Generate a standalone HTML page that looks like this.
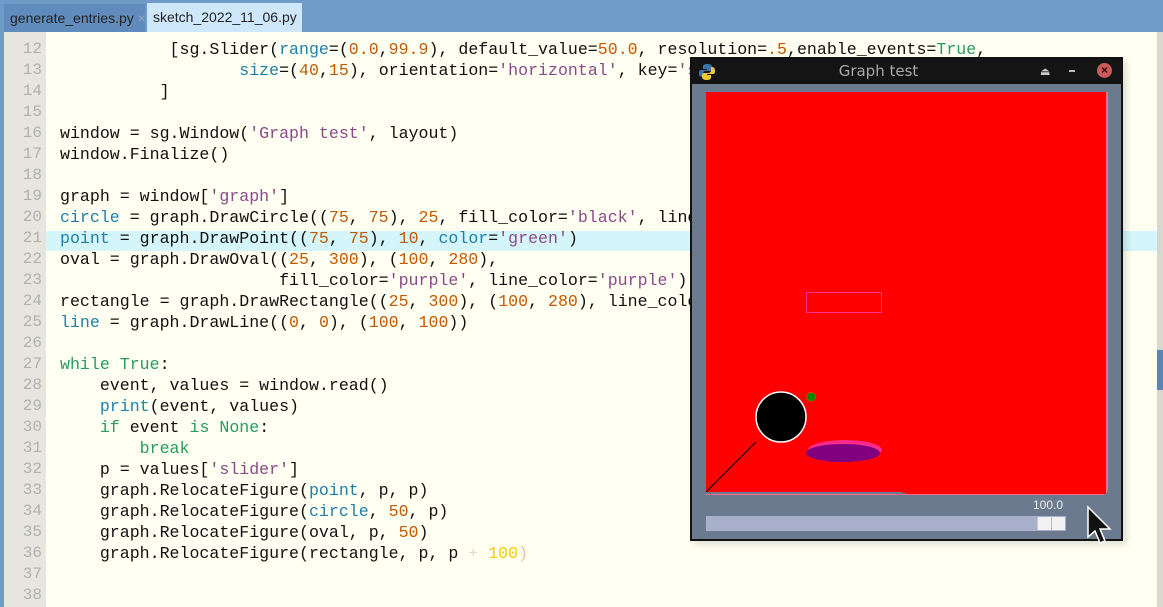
<!DOCTYPE html>
<html><head><meta charset="utf-8"><style>
*{margin:0;padding:0;box-sizing:border-box}
body{width:1163px;height:607px;overflow:hidden;background:#fffff2;position:relative;font-family:"Liberation Mono",monospace}
.tabbar{position:absolute;left:0;top:0;width:1163px;height:32px;background:#6f9bc9}
.tab{position:absolute;font-family:"Liberation Sans",sans-serif;font-size:14px;color:#222;padding:0 6px;line-height:28px;white-space:nowrap;overflow:hidden}
.gut{position:absolute;left:4px;top:32px;width:42px;height:575px;background:#e6e6df}
.lb{position:absolute;left:0;top:32px;width:4px;height:575px;background:#6f9bc9}
.ln{position:absolute;left:4px;width:38px;text-align:right;color:#b0b0b0;font-size:16px}
.cl{position:absolute;left:60px;font-size:16.6px;color:#111;white-space:pre;letter-spacing:0}
.k{color:#2a9a60}.v{color:#1f7fa8}.n{color:#c45a00}.s{color:#8a4a88}
.hl{position:absolute;left:46px;top:231px;width:1111px;height:20px;background:#d4f6fb}
.rs{position:absolute;left:1157px;top:32px;width:6px;height:575px;background:#d8d8d0}
</style></head><body>
<div class="tabbar"></div>
<div class="tab" style="left:4px;top:4px;width:141px;height:28px;background:#5f8cbc">generate_entries.py <span style="color:#9ab">×</span></div>
<div class="tab" style="left:147px;top:3px;width:155px;height:29px;background:#cfe7fb">sketch_2022_11_06.py <span style="color:#bcd">×</span></div>
<div class="lb"></div><div class="gut"></div><div class="rs"></div>
<div style="position:absolute;left:1157px;top:350px;width:6px;height:40px;background:#5b86b3"></div>
<div class="hl"></div>
<div style="font-size:16px">
<div class="ln" style="top:40px">12</div><div class="ln" style="top:61px">13</div><div class="ln" style="top:82px">14</div><div class="ln" style="top:103px">15</div><div class="ln" style="top:124px">16</div><div class="ln" style="top:145px">17</div><div class="ln" style="top:166px">18</div><div class="ln" style="top:187px">19</div><div class="ln" style="top:208px">20</div><div class="ln" style="top:229px">21</div><div class="ln" style="top:250px">22</div><div class="ln" style="top:271px">23</div><div class="ln" style="top:292px">24</div><div class="ln" style="top:313px">25</div><div class="ln" style="top:334px">26</div><div class="ln" style="top:355px">27</div><div class="ln" style="top:376px">28</div><div class="ln" style="top:397px">29</div><div class="ln" style="top:418px">30</div><div class="ln" style="top:439px">31</div><div class="ln" style="top:460px">32</div><div class="ln" style="top:481px">33</div><div class="ln" style="top:502px">34</div><div class="ln" style="top:523px">35</div><div class="ln" style="top:544px">36</div><div class="ln" style="top:565px">37</div><div class="ln" style="top:586px">38</div>
</div>
<div class="cl" style="top:40px">           [sg.Slider(<span class="v">range</span>=(<span class="n">0.0</span>,<span class="n">99.9</span>), default_value=<span class="n">50.0</span>, resolution=<span class="n">.5</span>,enable_events=<span class="k">True</span>,</div>
<div class="cl" style="top:61px">                  <span class="v">size</span>=(<span class="n">40</span>,<span class="n">15</span>), orientation=<span class="s">'horizontal'</span>, key=<span class="s">'slider'</span>)</div>
<div class="cl" style="top:82px">          ]</div>
<div class="cl" style="top:124px">window = sg.Window(<span class="s">'Graph test'</span>, layout)</div>
<div class="cl" style="top:145px">window.Finalize()</div>
<div class="cl" style="top:187px">graph = window[<span class="s">'graph'</span>]</div>
<div class="cl" style="top:208px"><span class="v">circle</span> = graph.DrawCircle((<span class="n">75</span>, <span class="n">75</span>), <span class="n">25</span>, fill_color=<span class="s">'black'</span>, line_color=<span class="s">'white'</span>)</div>
<div class="cl" style="top:229px"><span class="v">point</span> = graph.DrawPoint((<span class="n">75</span>, <span class="n">75</span>), <span class="n">10</span>, <span class="v">color</span>=<span class="s">'green'</span>)</div>
<div class="cl" style="top:250px">oval = graph.DrawOval((<span class="n">25</span>, <span class="n">300</span>), (<span class="n">100</span>, <span class="n">280</span>),</div>
<div class="cl" style="top:271px">                      fill_color=<span class="s">'purple'</span>, line_color=<span class="s">'purple'</span>)</div>
<div class="cl" style="top:292px">rectangle = graph.DrawRectangle((<span class="n">25</span>, <span class="n">300</span>), (<span class="n">100</span>, <span class="n">280</span>), line_color=<span class="s">'red'</span>)</div>
<div class="cl" style="top:313px"><span class="v">line</span> = graph.DrawLine((<span class="n">0</span>, <span class="n">0</span>), (<span class="n">100</span>, <span class="n">100</span>))</div>
<div class="cl" style="top:355px"><span class="k">while True</span>:</div>
<div class="cl" style="top:376px">    event, values = window.read()</div>
<div class="cl" style="top:397px">    <span class="v">print</span>(event, values)</div>
<div class="cl" style="top:418px">    <span class="k">if</span> event <span class="k">is None</span>:</div>
<div class="cl" style="top:439px">        <span class="k">break</span></div>
<div class="cl" style="top:460px">    p = values[<span class="s">'slider'</span>]</div>
<div class="cl" style="top:481px">    graph.RelocateFigure(<span class="v">point</span>, p, p)</div>
<div class="cl" style="top:502px">    graph.RelocateFigure(<span class="v">circle</span>, <span class="n">50</span>, p)</div>
<div class="cl" style="top:523px">    graph.RelocateFigure(oval, p, <span class="n">50</span>)</div>
<div class="cl" style="top:544px">    graph.RelocateFigure(rectangle, p, p <span style="color:#ddd">+</span> <span style="color:#f0d000">100</span><span style="color:#f0c0a0">)</span></div>

<!-- window -->
<div style="position:absolute;left:690px;top:57px;width:433px;height:484px;background:#6b7a8f;border:2px solid #111;box-shadow:4px 4px 6px rgba(0,0,0,.12)"></div>
<div style="position:absolute;left:692px;top:59px;width:429px;height:25px;background:#141414"></div>
<svg style="position:absolute;left:698px;top:63px" width="18" height="18" viewBox="0 0 18 18"><path d="M9 1C5 1 5 3 5 4v2h4v1H3C1 7 1 9 1 10s0 4 3 4h1v-3c0-2 1-3 3-3h4c1 0 2-1 2-2V4c0-2-2-3-5-3z" fill="#3b75b0"/><path d="M9 17c4 0 4-2 4-3v-2H9v-1h6c2 0 2-2 2-3s0-4-3-4h-1v3c0 2-1 3-3 3H6c-1 0-2 1-2 2v2c0 2 2 3 5 3z" fill="#f2c73a"/></svg>
<div style="position:absolute;left:692px;top:59px;width:373px;text-align:center;font-family:'DejaVu Sans',sans-serif;font-size:15px;color:#a8a8a8;line-height:24px">Graph test</div>
<div style="position:absolute;left:1040px;top:65px;color:#ccc;font-size:11px;font-family:'DejaVu Sans',sans-serif">⏏</div>
<div style="position:absolute;left:1069px;top:70px;width:6px;height:2px;background:#bbb"></div>
<div style="position:absolute;left:1097px;top:63px;width:15px;height:15px;border-radius:50%;background:#c85a5a;color:#3a0a0a;font-size:12px;line-height:15px;text-align:center;font-family:'Liberation Sans',sans-serif;font-weight:bold">×</div>
<div style="position:absolute;left:706px;top:92px;width:402px;height:403px;background:#ff6a8a;border-radius:0 0 6px 0"></div>
<div style="position:absolute;left:706px;top:92px;width:400px;height:400px;background:#ff0000"></div>
<svg style="position:absolute;left:706px;top:92px" width="400" height="402">
<rect x="100.5" y="200.5" width="75" height="20" fill="none" stroke="#ff3399" stroke-width="1"/>
<line x1="0" y1="400" x2="50" y2="350" stroke="#000" stroke-width="1"/>
<circle cx="75" cy="325" r="25" fill="#000" stroke="#fff" stroke-width="1.5"/>
<circle cx="105" cy="305" r="4.5" fill="#008800" stroke="#ff6600" stroke-width=".5"/>
<ellipse cx="139" cy="358" rx="37" ry="10" fill="#ff2a8a"/>
<ellipse cx="137" cy="361" rx="37" ry="9" fill="#800080"/>
<rect x="0" y="400" width="400" height="2" fill="#6b7a8f"/>
<path d="M0 400 L195 400 Q210 405 225 403 L400 402 L400 400Z" fill="#ff0000"/>
</svg>
<div style="position:absolute;left:1033px;top:498px;font-family:'Liberation Sans',sans-serif;font-size:12px;color:#eee">100.0</div>
<div style="position:absolute;left:706px;top:516px;width:360px;height:15px;background:#a8b0cc"></div>
<div style="position:absolute;left:1037px;top:517px;width:28px;height:13px;background:#f2f2f2;border-left:1px solid #ccc"></div>
<div style="position:absolute;left:1051px;top:517px;width:1px;height:13px;background:#bbb"></div>
<svg style="position:absolute;left:1086px;top:505px" width="30" height="42" viewBox="0 0 30 42"><path d="M2 2 L2 32 L9 26 L14 38 L19 36 L14 24 L24 24 Z" fill="#111" stroke="#fff" stroke-width="1.5"/></svg>
</body></html>
